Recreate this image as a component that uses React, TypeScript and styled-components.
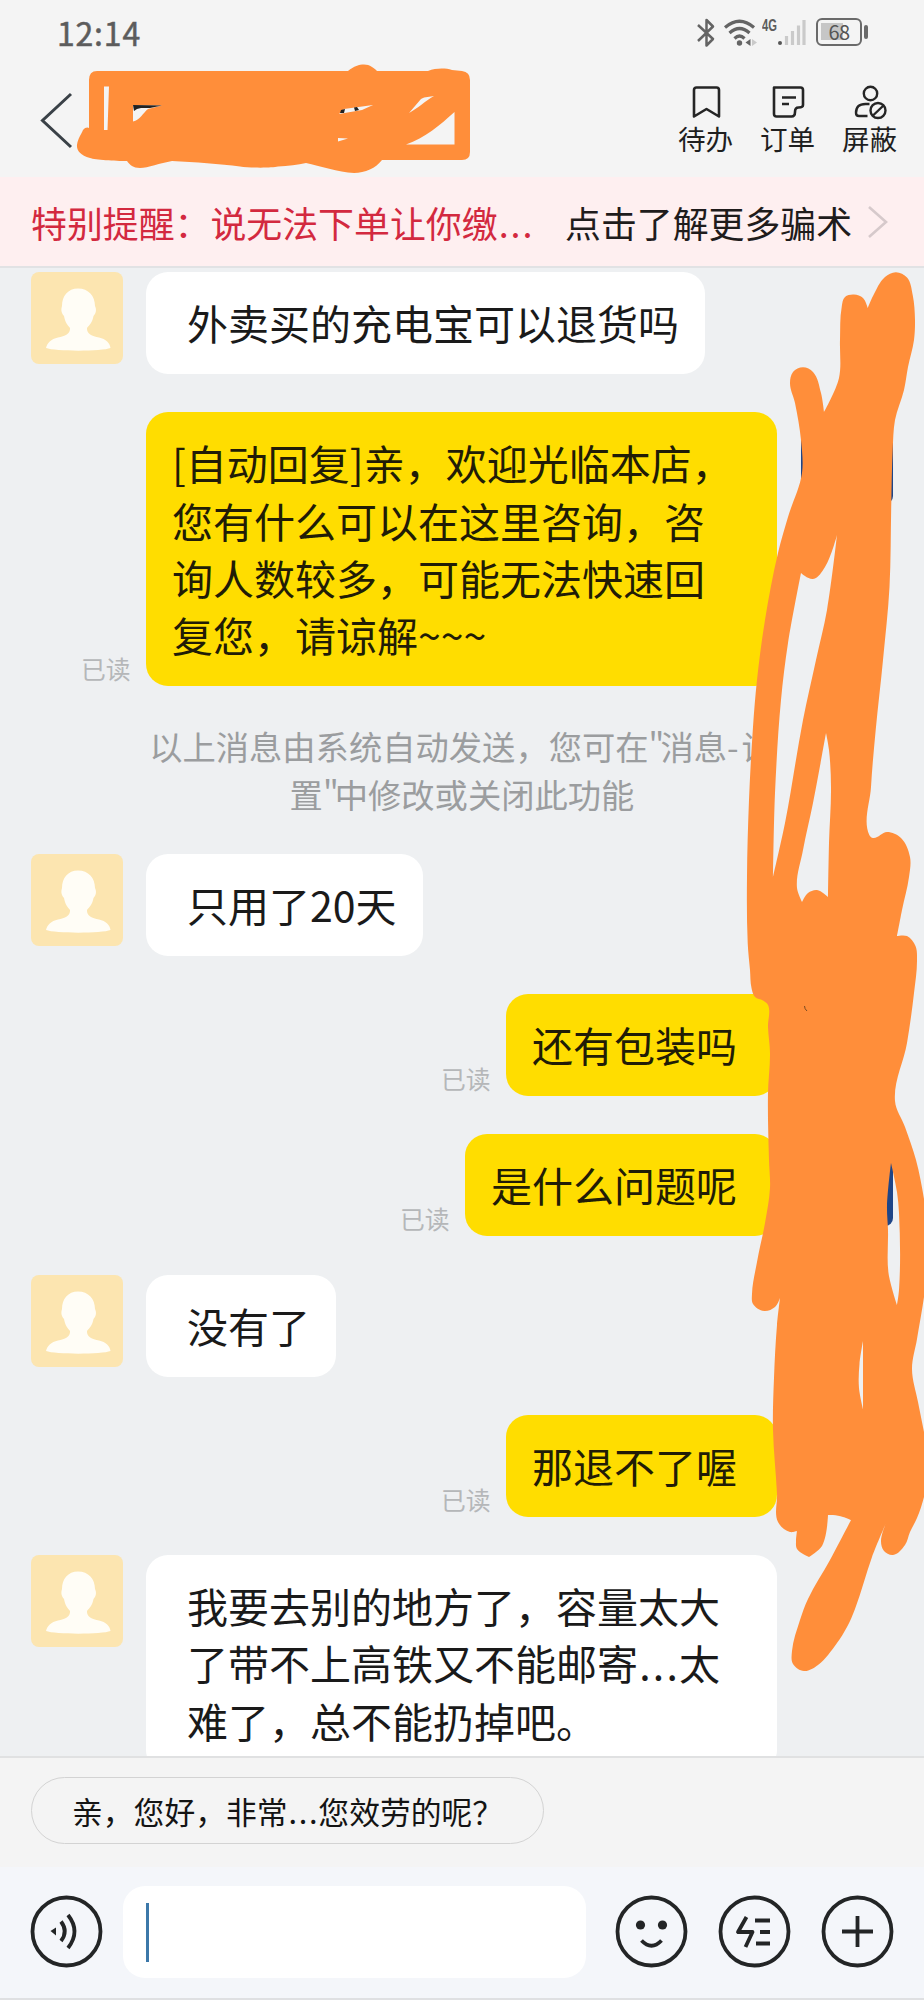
import React from "react";
import styled, { createGlobalStyle } from "styled-components";

const ORANGE = "#ff8e3a";
const INK = "#232526";

const GlobalStyle = createGlobalStyle`
  * { box-sizing: border-box; }
  body {
    margin: 0;
    font-family: "Noto Sans CJK SC", "Noto Sans", sans-serif;
    color: #1b1b1b;
    background: #eef0f2;
  }
`;

const Screen = styled.main`
  position: relative;
  display: flex;
  flex-direction: column;
  width: 924px;
  height: 2000px;
  overflow: hidden;
  background: #eef0f2;
`;

const StatusBar = styled.header`
  flex: none;
  display: flex;
  align-items: flex-start;
  justify-content: space-between;
  height: 64px;
  padding: 0 56px 0 57px;
  background: #f4f4f4;
`;

const Clock = styled.time`
  margin-top: 2px;
  font-size: 32px;
  line-height: 60px;
  letter-spacing: 0.8px;
  color: #5c5c5c;
  -webkit-text-stroke: 0.5px #5c5c5c;
`;

const StatusIcons = styled.div`
  display: flex;
  align-items: flex-start;
  height: 32px;
  margin-top: 18px;
`;

const BluetoothIcon = styled.svg`
  margin-right: 7px;
`;

const NetworkLabel = styled.span`
  width: 16px;
  margin: 0 0 0 5px;
  font: bold 16px/16px "Liberation Sans", sans-serif;
  color: #5c5c5c;
  transform: scaleX(0.7);
  transform-origin: left;
`;

const Battery = styled.div`
  width: 46px;
  height: 28px;
  margin-left: 10px;
  border: 2.4px solid #6a6a6a;
  border-radius: 6px;
  font: 20px/24px "Noto Sans CJK SC", sans-serif;
  letter-spacing: -0.5px;
  text-align: center;
  color: #555;
  background: linear-gradient(#c6c6c6, #c6c6c6) 3px 3px / 22px 17px no-repeat;
`;

const BatteryCap = styled.div`
  width: 4px;
  height: 14px;
  margin: 7px 0 0 2px;
  border-radius: 2px;
  background: #6a6a6a;
`;

const TitleBar = styled.nav`
  flex: none;
  display: flex;
  align-items: flex-start;
  justify-content: space-between;
  height: 113px;
  padding: 20px 13.5px 0 40px;
  background: #f4f4f4;
`;

const BackIcon = styled.svg`
  width: 34px;
  height: 58px;
  margin-top: 8px;
`;

const Actions = styled.div`
  display: flex;
`;

const Action = styled.div`
  display: flex;
  flex-direction: column;
  align-items: center;
  width: 82px;
  font-size: 27.6px;
  line-height: 36px;
  color: #1f1f1f;

  svg {
    width: 34px;
    height: 36px;
  }
`;

const Alert = styled.section`
  flex: none;
  display: flex;
  align-items: center;
  height: 91px;
  padding: 0 31px;
  border-bottom: 2px solid #e1e2e4;
  background: #feeff0;
  font-size: 35.9px;
  line-height: 56px;
  white-space: nowrap;

  svg { flex: none; }
`;

const AlertText = styled.span`
  flex: none;
  width: 534px;
  color: #d3293f;
`;

const AlertLink = styled.span`
  flex: none;
  width: 302px;
  color: #1f1c1c;
`;

const Ellipsis = styled.span`
  margin: 0 -0.03em 0 0.03em;
  letter-spacing: 0.055em;
`;

const Chat = styled.section`
  flex: none;
  height: 1488px;
  padding: 4px 31px 0;
  overflow: hidden;
`;

const Row = styled.div<{ $mine?: boolean }>`
  display: flex;
  justify-content: ${(p) => (p.$mine ? "flex-end" : "flex-start")};
  align-items: flex-start;
  margin-bottom: 38.3px;
`;

const AvatarBox = styled.div<{ $mine?: boolean }>`
  flex: none;
  width: 92px;
  height: 92px;
  margin: ${(p) => (p.$mine ? "0 0 0 24px" : "0 23px 0 0")};
  border-radius: 8px;
  overflow: hidden;
  background: ${(p) => (p.$mine ? "#1f4587" : "#fce5b0")};

  svg { display: block; }
`;

const Bubble = styled.div<{ $mine?: boolean; $wide?: boolean }>`
  ${(p) => (p.$wide ? "width: 631px;" : "")}
  padding: ${(p) => (p.$mine ? "22px 40px 22.7px 26px" : "22px 26px 22.7px 41px")};
  border-radius: 22px;
  background: ${(p) => (p.$mine ? "#ffdd00" : "#ffffff")};
  color: ${(p) => (p.$mine ? "#211c06" : "#1a1a1a")};
  font-size: 41px;
  line-height: 57.3px;
  white-space: pre;
`;

const ReadMark = styled.span`
  align-self: flex-end;
  margin: 0 15.5px 1px 0;
  font-size: 24.8px;
  line-height: 34px;
  color: #b5b7b9;
`;

const Notice = styled.p`
  margin: -2px 0 35.3px;
  font-size: 33.3px;
  line-height: 48px;
  text-align: center;
  white-space: pre;
  color: #9b9d9f;
`;

const Quote = styled.span`
  letter-spacing: -4px;
`;

const Hyphen = styled.span`
  letter-spacing: 3px;
`;

const Suggestions = styled.section`
  flex: none;
  height: 111px;
  padding: 19px 31px 0;
  border-top: 2px solid #e0e1e2;
  background: #f4f4f4;
`;

const Suggestion = styled.button`
  display: block;
  width: 513px;
  height: 67px;
  padding: 0 0 0 40px;
  border: 1.5px solid #d3d3d3;
  border-radius: 34px;
  background: transparent;
  font: 30.8px/60px "Noto Sans CJK SC", sans-serif;
  text-align: left;
  white-space: nowrap;
  color: #141414;
`;

const Composer = styled.footer`
  flex: none;
  display: flex;
  align-items: center;
  height: 133px;
  padding: 0 30px 2px 30px;
  border-bottom: 2px solid #dfe0e2;
  background: #f4f6fa;
`;

const Field = styled.div`
  width: 463px;
  height: 92px;
  margin: 0 29px 0 20px;
  padding: 17px 23px;
  border-radius: 22px;
  background: #fff;
`;

const Caret = styled.div`
  width: 3px;
  height: 59px;
  background: #3c78a9;
`;

const Tools = styled.div`
  display: flex;
  gap: 29.8px;
`;

const Scribble = styled.svg`
  position: absolute;
  inset: 0;
  pointer-events: none;
`;

type Pt = [number, number];

// Closed smooth outline; sharp turns in the outline stay sharp.
function outline(pts: Pt[]): string {
  const n = pts.length;
  const tangents = pts.map((p, i): Pt => {
    const a = pts[(i + n - 1) % n];
    const b = pts[(i + 1) % n];
    const u = [p[0] - a[0], p[1] - a[1]];
    const v = [b[0] - p[0], b[1] - p[1]];
    const lu = Math.hypot(u[0], u[1]);
    const lv = Math.hypot(v[0], v[1]);
    const cos = (u[0] * v[0] + u[1] * v[1]) / (lu * lv);
    if (cos < 0.3) return [0, 0];
    const dx = u[0] / lu + v[0] / lv;
    const dy = u[1] / lu + v[1] / lv;
    const l = Math.hypot(dx, dy);
    return [dx / l, dy / l];
  });
  let d = `M${pts[0][0]} ${pts[0][1]}`;
  for (let i = 0; i < n; i++) {
    const j = (i + 1) % n;
    const [x1, y1] = pts[i];
    const [x2, y2] = pts[j];
    const k = Math.hypot(x2 - x1, y2 - y1) * 0.33;
    const t1 = tangents[i];
    const t2 = tangents[j];
    d += `C${(x1 + t1[0] * k).toFixed(1)} ${(y1 + t1[1] * k).toFixed(1)} ${(x2 - t2[0] * k).toFixed(1)} ${(y2 - t2[1] * k).toFixed(1)} ${x2} ${y2}`;
  }
  return d + "Z";
}

const sideStroke: Pt[] = [
  [867.7, 308], [873, 296], [885, 277], [896, 272.3], [907, 277.5], [912.7, 295], [915, 320], [914, 340],
  [908, 367], [904, 390], [895, 420], [892.7, 450], [891.3, 503], [889.5, 587], [883, 660], [875.7, 730],
  [871, 787], [869.3, 835], [873, 838], [887, 832], [901, 838], [910, 857], [909, 877], [902, 910],
  [897, 936], [907, 936], [915.5, 946], [917, 960], [914, 993], [907, 1043], [895, 1101], [905, 1127],
  [916, 1160], [924, 1199], [930, 1250], [924, 1297], [917, 1339], [912, 1369], [918, 1402], [924, 1432],
  [930, 1465], [924, 1497], [917, 1518], [910, 1532], [905, 1545], [893, 1555], [884, 1551], [881, 1541],
  [886, 1523], [872, 1557], [855, 1609], [847, 1627], [837, 1643], [818, 1665], [804, 1671], [793, 1664],
  [792, 1651], [800, 1620], [808, 1599], [830, 1560], [851, 1520], [843, 1517], [833, 1515], [828, 1515],
  [822, 1546], [809, 1557], [797, 1549], [796, 1541], [797, 1531], [790, 1532], [778, 1522], [777, 1494],
  [773, 1430], [774, 1378], [777, 1325], [780, 1298], [775, 1307], [764, 1311], [753, 1304], [752, 1294],
  [757, 1262], [765, 1223], [770, 1188], [769, 1160], [768, 1093], [770, 1053], [768, 1027], [768, 1005],
  [763, 1000.5], [755, 997], [751.5, 988], [750, 970], [747.7, 943], [747, 877], [749, 800], [753, 727],
  [757, 680], [765, 620], [778, 553], [788, 517], [802, 473], [801, 440], [795, 403], [790, 383],
  [793, 372], [803, 367.3], [813, 372], [821, 393], [824, 412], [839, 378], [840, 340], [841.7, 307],
  [845, 297], [854, 294.5], [863, 298],
];

const sideGaps: Pt[][] = [
  [[837, 535], [825, 567], [813, 579], [801, 573], [788, 643], [781, 700], [775, 793], [773, 877], [785, 823], [803, 720], [816, 660], [827, 610]],
  [[826, 733], [813, 803], [803, 850], [797, 888], [802, 902], [808, 893], [817, 890], [828, 897], [829, 843], [831, 787], [829, 750]],
  [[891, 1163], [897, 1192], [899, 1213], [899, 1290], [897, 1305], [888.5, 1273], [888, 1230], [887, 1206]],
  [[863, 1341], [859.5, 1364], [859, 1388], [863, 1409]],
];

const titleStroke =
  "M89 80Q89 71 97 71L348 71C354 66 359 64.5 364 64.5C370 64.5 374 68 377 71L428 71C436 68 445 68 452 70L462 71Q470 72 470 80L470 152Q470 160 462 160L382 160C376 168 365 173 354 173C338 172 320 166 306 163C298 165 288 166 278 166.5C272 168 250 168 240 166.5C220 164 195 162 172 161C160 163 148 168 140 168C133 168 130 165 127 161C115 161 95 160 90 158C80 155 76.5 150 77 145C78 138 81 135 83 130C85 127 88 127 89 128Z" +
  "M104 86.5L109 86.5L107.5 130L104 130Z" +
  "M133 105L162 105.5L148 109C143 113 140 120 133 121.5Z" +
  "M339 114L344 109L373 105L362 110Z" +
  "M338 138L348 138.5L338 141.5Z" +
  "M409 113L421 99C425 96.5 430 97 434 96C425 101 417 109 409 113Z" +
  "M406 144.5L454.5 144.5L454.5 112C440 125 425 138 406 144.5Z";

function Person() {
  return (
    <svg width="92" height="92" viewBox="0 0 92 92">
      <path
        fill="#fffdf6"
        d="M47 16.5C57.5 16.5 64 24 64 34C65.5 37 65.5 41 62.5 44C61.5 50 58.5 53 56 56C55.5 62 61 64 68 65.5C75 67 79 71 79.5 76C71 79.5 24 79.5 15 76C16 71 20 67 27 65.5C34 64 39.5 62 39 56C36.5 53 34 50 33 44C30 41 30 37 31 34C31 24 37 16.5 47 16.5Z"
      />
    </svg>
  );
}

function Avatar({ mine }: { mine?: boolean }) {
  return <AvatarBox $mine={mine}>{!mine && <Person />}</AvatarBox>;
}

// Draws "..." on the baseline, spaced to one em in all.
function Dotted({ text }: { text: string }) {
  return (
    <>
      {text.split("...").map((part, i) => (
        <React.Fragment key={i}>
          {i > 0 && <Ellipsis>...</Ellipsis>}
          {part}
        </React.Fragment>
      ))}
    </>
  );
}

type MessageProps = { lines: string[]; mine?: boolean; wide?: boolean };

function Message({ lines, mine, wide }: MessageProps) {
  const bubble = (
    <Bubble $mine={mine} $wide={wide}>
      {lines.map((line, i) => (
        <div key={i}>
          <Dotted text={line} />
        </div>
      ))}
    </Bubble>
  );
  return mine ? (
    <Row $mine>
      <ReadMark>已读</ReadMark>
      {bubble}
      <Avatar mine />
    </Row>
  ) : (
    <Row>
      <Avatar />
      {bubble}
    </Row>
  );
}

function RoundIcon({ children }: { children: React.ReactNode }) {
  return (
    <svg width="73" height="73" viewBox="0 0 73 73" fill="none" stroke={INK} strokeWidth="3.8">
      <circle cx="36.5" cy="36.5" r="34" />
      {children}
    </svg>
  );
}

export default function App() {
  return (
    <>
      <GlobalStyle />
      <Screen lang="zh-CN">
        <StatusBar>
          <Clock>12:14</Clock>
          <StatusIcons>
            <BluetoothIcon width="20" height="30" viewBox="0 0 20 30" fill="none" stroke="#646464" strokeWidth="2.5">
              <path d="M2 7L17 21L10.5 27.5V2L17 8.5L2 23" strokeLinejoin="round" />
            </BluetoothIcon>
            <svg width="34" height="30" viewBox="0 0 34 30" fill="none" stroke="#646464" strokeWidth="3.2">
              <path d="M2 9.5Q16.5 -3 31 9.5M6.5 15Q16.5 6 26.5 15M11.5 20.5Q16.5 15.5 21.5 20.5" />
              <circle cx="16.5" cy="25" r="2.7" fill="#646464" stroke="none" />
              <path d="M27.5 21v7l-5-3.5z" fill="#646464" stroke="none" />
              <path d="M29 21v7l5-3.5z" fill="#cacaca" stroke="none" />
            </svg>
            <NetworkLabel>4G</NetworkLabel>
            <svg width="28" height="30" viewBox="0 0 28 30">
              <circle cx="2" cy="25" r="2" fill="#555" />
              <path d="M8.5 27V18M14.5 27V13M20.5 27V7.5M26 27V2" stroke="#cacaca" strokeWidth="3.2" />
            </svg>
            <Battery>68</Battery>
            <BatteryCap />
          </StatusIcons>
        </StatusBar>

        <TitleBar>
          <BackIcon viewBox="0 0 34 58" fill="none" stroke="#3a4147" strokeWidth="3">
            <path d="M31 2L2.5 28.5L31 55" />
          </BackIcon>
          <Actions>
            <Action>
              <svg viewBox="0 0 34 36" fill="none" stroke="#252525" strokeWidth="2.6" strokeLinejoin="round">
                <path d="M5 6Q5 3.5 7.5 3.5H27.5Q30 3.5 30 6V32.5L17.5 25L5 32.5Z" />
              </svg>
              待办
            </Action>
            <Action>
              <svg viewBox="0 0 34 36" fill="none" stroke="#252525" strokeWidth="2.6" strokeLinejoin="round">
                <path d="M5 3.5H29.5Q32 3.5 32 6V21Q32 23.5 27.5 23.5Q24 23.5 24 28Q24 32.5 20.5 32.5H5.5Q3 32.5 3 30V3.5Z" />
                <path d="M11 13.5H25M11 20H18" />
              </svg>
              订单
            </Action>
            <Action>
              <svg viewBox="0 0 34 36" fill="none" stroke="#252525" strokeWidth="2.4">
                <circle cx="17.5" cy="9.5" r="6.7" />
                <path d="M16.5 20H12.5Q3 20 3 29Q3 32 6 32H14.5" />
                <circle cx="25" cy="26.5" r="7.5" />
                <path d="M20 31.5L30.5 21.5" />
              </svg>
              屏蔽
            </Action>
          </Actions>
        </TitleBar>

        <Alert>
          <AlertText>
            <Dotted text="特别提醒：说无法下单让你缴..." />
          </AlertText>
          <AlertLink>点击了解更多骗术</AlertLink>
          <svg width="22" height="36" viewBox="0 0 22 36" fill="none" stroke="#d6c9cb" strokeWidth="2.6">
            <path d="M2 3L19 18L2 33" />
          </svg>
        </Alert>

        <Chat>
          <Message lines={["外卖买的充电宝可以退货吗"]} />
          <Message
            mine
            wide
            lines={["[自动回复]亲，欢迎光临本店，", "您有什么可以在这里咨询，咨", "询人数较多，可能无法快速回", "复您，请谅解~~~"]}
          />
          <Notice>
            以上消息由系统自动发送，您可在<Quote>"</Quote>消息<Hyphen>-</Hyphen>设{"\n"}置<Quote>"</Quote>中修改或关闭此功能
          </Notice>
          <Message lines={["只用了20天"]} />
          <Message mine lines={["还有包装吗"]} />
          <Message mine lines={["是什么问题呢"]} />
          <Message lines={["没有了"]} />
          <Message mine lines={["那退不了喔"]} />
          <Message wide lines={["我要去别的地方了，容量太大", "了带不上高铁又不能邮寄...太", "难了，总不能扔掉吧。"]} />
        </Chat>

        <Suggestions>
          <Suggestion>
            <Dotted text="亲，您好，非常...您效劳的呢？" />
          </Suggestion>
        </Suggestions>

        <Composer>
          <RoundIcon>
            <path d="M26 32.5V40.5L20.5 36Z" fill={INK} stroke="none" />
            <path d="M31 26.5Q38.5 36.5 31 46M38 20Q51 36.5 38 53" />
          </RoundIcon>
          <Field>
            <Caret />
          </Field>
          <Tools>
            <RoundIcon>
              <circle cx="25.5" cy="30" r="4.6" fill={INK} stroke="none" />
              <circle cx="47.5" cy="30" r="4.6" fill={INK} stroke="none" />
              <path d="M26.5 45.5Q36.5 56 46.5 45.5" />
            </RoundIcon>
            <RoundIcon>
              <path d="M28.5 22L20 37H34.5L27.5 52" strokeLinejoin="round" />
              <path d="M37 25.5H52M42 37H52M38 48.5H52" />
            </RoundIcon>
            <RoundIcon>
              <path d="M36.5 21V52M21 36.5H52" />
            </RoundIcon>
          </Tools>
        </Composer>

        <Scribble width="924" height="2000" viewBox="0 0 924 2000">
          <path d={titleStroke} fill={ORANGE} fillRule="evenodd" />
          <path d="M133 105L162 105.5L150 108L141 108L137 109L134 111Z" fill="#222" />
          <path d="M341 110L345 109L344 113L340 113Z M354 107.5L357 107L359 110L355 111Z" fill="#222" />
          <path d={[sideStroke, ...sideGaps].map(outline).join("")} fill={ORANGE} fillRule="evenodd" />
          <path d="M804.5 1006Q804.5 1009 807 1011" stroke="#7a4a20" fill="none" />
        </Scribble>
      </Screen>
    </>
  );
}
